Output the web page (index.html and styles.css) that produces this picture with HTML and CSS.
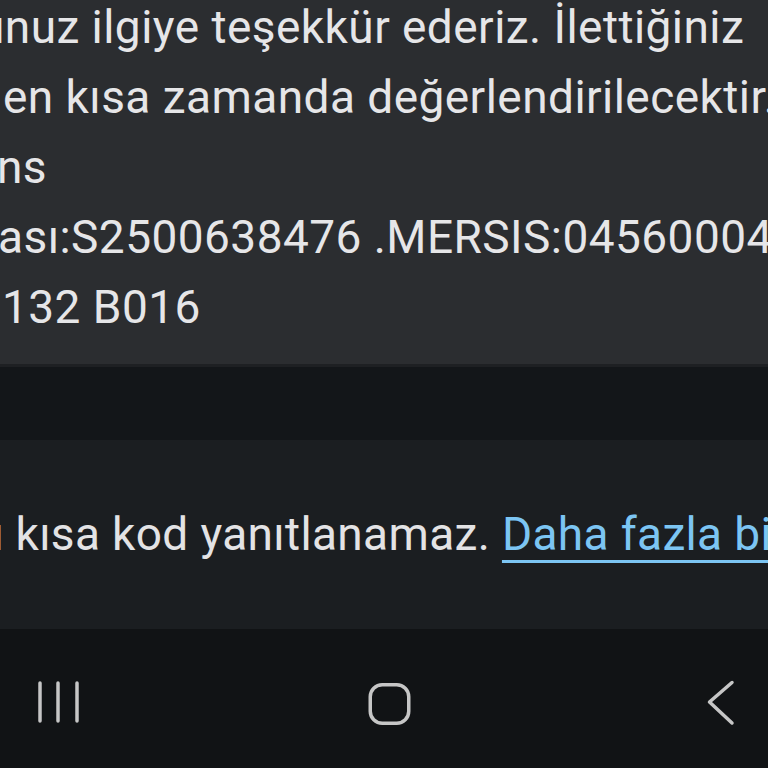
FILE: index.html
```html
<!DOCTYPE html>
<html lang="tr">
<head>
<meta charset="utf-8">
<title>Mesaj</title>
<link rel="stylesheet" href="styles.css">
</head>
<body>
<div class="screen">
  <section class="bubble">
    <div class="line l1">unuz ilgiye teşekkür ederiz. İlettiğiniz</div>
    <div class="line l2">en kısa zamanda değerlendirilecektir.</div>
    <div class="line l3">ns</div>
    <div class="line l4">ası:S2500638476 .MERSIS:0456000412</div>
    <div class="line l5">132 B016</div>
  </section>
  <div class="gap"></div>
  <section class="notice">
    <div class="notice-text">u kısa kod yanıtlanamaz. <a class="link" href="#">Daha fazla bilgi</a></div>
  </section>
  <nav class="navbar">
    <svg class="nav-icon" width="48" height="48" viewBox="0 0 48 48">
      <line x1="6" y1="4" x2="6" y2="42"/>
      <line x1="24" y1="4" x2="24" y2="42"/>
      <line x1="43" y1="4" x2="43" y2="42"/>
    </svg>
    <svg class="nav-icon" width="48" height="48" viewBox="0 0 48 48">
      <rect x="4.25" y="5.75" width="38.5" height="38.5" rx="12" ry="12"/>
    </svg>
    <svg class="nav-icon" width="48" height="48" viewBox="0 0 48 48">
      <polyline points="35,3.5 12.5,23 35,44"/>
    </svg>
  </nav>
</div>
</body>
</html>
```

FILE: styles.css
```css
html, body {
  margin: 0;
  padding: 0;
  background: #111315;
}
.screen {
  width: 768px;
  height: 768px;
  overflow: hidden;
  display: flex;
  flex-direction: column;
  font-family: Roboto, "Noto Sans", sans-serif;
}
.bubble {
  background: #2b2d30;
  height: 367px;
  flex: none;
  box-sizing: border-box;
  overflow: hidden;
  border-bottom: 3px solid #1e2023;
}
.line {
  font-size: 46px;
  line-height: 70px;
  letter-spacing: 0.45px;
  color: #e6e6e8;
  white-space: nowrap;
}
.l1 { margin-top: -8px; margin-left: -21px; }
.l2 { margin-left: 3px; }
.l3 { margin-left: -3px; }
.l4 { margin-left: -2px; }
.l5 { margin-left: 2px; }
.gap {
  height: 73px;
  flex: none;
  background: #131619;
}
.notice {
  height: 189px;
  flex: none;
  background: #1b1e21;
  box-sizing: border-box;
  padding-top: 64px;
  overflow: hidden;
}
.notice-text {
  font-size: 46px;
  line-height: 60px;
  letter-spacing: 0.35px;
  color: #e3e3e5;
  white-space: nowrap;
  margin-left: -22px;
}
.link {
  color: #7cc5f3;
  text-decoration: underline;
  text-decoration-thickness: 3px;
  text-underline-offset: 10px;
}
.navbar {
  flex: 1;
  background: #111315;
  display: flex;
  justify-content: space-between;
  align-items: flex-start;
  padding: 50px 23px 0 34px;
}
.nav-icon {
  fill: none;
  stroke: #c6c6c6;
  stroke-width: 3.5;
  stroke-linecap: round;
  stroke-linejoin: round;
}
```
